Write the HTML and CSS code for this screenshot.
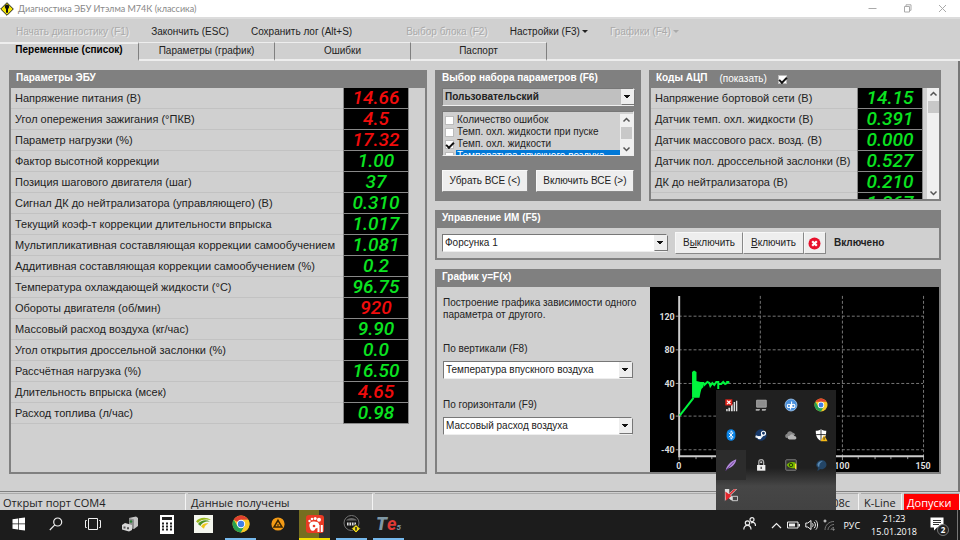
FILE: index.html
```html
<!DOCTYPE html>
<html lang="ru">
<head>
<meta charset="utf-8">
<title>Диагностика ЭБУ Итэлма М74К (классика)</title>
<link rel="stylesheet" href="styles.css">
</head>
<body>
<header class="titlebar">
  <svg class="app-icon" width="14" height="14" viewBox="0 0 14 14"><path d="M7 .7 13.3 7 7 13.3.7 7z" fill="#f3e600" stroke="#222" stroke-width="1"/><path d="M6 6h2v4.800H6z" fill="#111"/><circle cx="7" cy="4.800" r="2.200" fill="#111"/></svg>
  <h1 class="title">Диагностика ЭБУ Итэлма М74К (классика)</h1>
  <div class="window-buttons">
    <button type="button" aria-label="Свернуть"><svg width="9" height="9" viewBox="0 0 9 9"><path d="M.5 4.500h8"/></svg></button>
    <button type="button" aria-label="Восстановить"><svg width="9" height="9" viewBox="0 0 9 9"><path d="M1.500 2.500h5v5.500h-5zM3 2.500V.8h5v5.500H6.500"/></svg></button>
    <button type="button" aria-label="Закрыть"><svg width="9" height="9" viewBox="0 0 9 9"><path d="M1 1l7 7M8 1 1 8"/></svg></button>
  </div>
</header>

<nav class="menu">
  <button type="button" disabled>Начать диагностику (F1)</button>
  <button type="button">Закончить (ESC)</button>
  <button type="button">Сохранить лог (Alt+S)</button>
  <button type="button" class="group-start" disabled>Выбор блока (F2)</button>
  <button type="button" class="drop">Настройки (F3)</button>
  <button type="button" class="drop" disabled>Графики (F4)</button>
</nav>

<div class="tabs" role="tablist">
  <button type="button" role="tab" class="tab active" aria-selected="true">Переменные (список)</button>
  <button type="button" role="tab" class="tab">Параметры (график)</button>
  <button type="button" role="tab" class="tab">Ошибки</button>
  <button type="button" role="tab" class="tab">Паспорт</button>
  <span class="tab-rest"></span>
</div>

<main class="content">
  <section class="panel ecu">
    <h2>Параметры ЭБУ</h2>
    <table class="readings">
      <tr><th scope="row">Напряжение питания (В)</th><td class="bad">14.66</td></tr>
      <tr><th scope="row">Угол опережения зажигания (°ПКВ)</th><td class="bad">4.5</td></tr>
      <tr><th scope="row">Параметр нагрузки (%)</th><td class="bad">17.32</td></tr>
      <tr><th scope="row">Фактор высотной коррекции</th><td>1.00</td></tr>
      <tr><th scope="row">Позиция шагового двигателя (шаг)</th><td>37</td></tr>
      <tr><th scope="row">Сигнал ДК до нейтрализатора (управляющего) (В)</th><td>0.310</td></tr>
      <tr><th scope="row">Текущий коэф-т коррекции длительности впрыска</th><td>1.017</td></tr>
      <tr><th scope="row">Мультипликативная составляющая коррекции самообучением</th><td>1.081</td></tr>
      <tr><th scope="row">Аддитивная составляющая коррекции самообучением (%)</th><td>0.2</td></tr>
      <tr><th scope="row">Температура охлаждающей жидкости (°C)</th><td>96.75</td></tr>
      <tr><th scope="row">Обороты двигателя (об/мин)</th><td class="bad">920</td></tr>
      <tr><th scope="row">Массовый расход воздуха (кг/час)</th><td>9.90</td></tr>
      <tr><th scope="row">Угол открытия дроссельной заслонки (%)</th><td>0.0</td></tr>
      <tr><th scope="row">Рассчётная нагрузка (%)</th><td>16.50</td></tr>
      <tr><th scope="row">Длительность впрыска (мсек)</th><td class="bad">4.65</td></tr>
      <tr><th scope="row">Расход топлива (л/час)</th><td>0.98</td></tr>
    </table>
  </section>

  <section class="panel choice">
    <h2><label for="preset">Выбор набора параметров (F6)</label></h2>
    <div class="choice-body">
      <span class="combo grey"><select id="preset"><option>Пользовательский</option></select></span>
      <div class="checklist">
        <div class="checklist-items">
          <label><input type="checkbox"><span>Количество ошибок</span></label>
          <label><input type="checkbox"><span>Темп. охл. жидкости при пуске</span></label>
          <label><input type="checkbox" checked><span>Темп. охл. жидкости</span></label>
          <label class="selected"><input type="checkbox"><span>Температура впускного воздуха</span></label>
        </div>
        <div class="scrollbar">
          <svg width="9" height="6" viewBox="0 0 9 6"><path d="M1.500 4.500l3-3 3 3"/></svg>
          <i class="thumb"></i>
          <svg width="9" height="6" viewBox="0 0 9 6"><path d="M1.500 1.500l3 3 3-3"/></svg>
        </div>
      </div>
      <div class="choice-buttons">
        <button type="button" class="push">Убрать ВСЕ (&lt;)</button>
        <button type="button" class="push">Включить ВСЕ (&gt;)</button>
      </div>
    </div>
  </section>

  <section class="panel adc">
    <header class="adc-head">
      <h2>Коды АЦП</h2>
      <label>(показать) <input type="checkbox" checked></label>
    </header>
    <div class="adc-body">
      <div class="adc-view">
        <table class="readings">
          <tr><th scope="row">Напряжение бортовой сети (В)</th><td>14.15</td></tr>
          <tr><th scope="row">Датчик темп. охл. жидкости (В)</th><td>0.391</td></tr>
          <tr><th scope="row">Датчик массового расх. возд. (В)</th><td>0.000</td></tr>
          <tr><th scope="row">Датчик пол. дроссельной заслонки (В)</th><td>0.527</td></tr>
          <tr><th scope="row">ДК до нейтрализатора (В)</th><td>0.210</td></tr>
          <tr><th scope="row"></th><td>1.267</td></tr>
        </table>
      </div>
      <div class="scrollbar">
        <svg width="9" height="6" viewBox="0 0 9 6"><path d="M1.500 4.500l3-3 3 3"/></svg>
        <i class="thumb"></i>
        <svg width="9" height="6" viewBox="0 0 9 6"><path d="M1.500 1.500l3 3 3-3"/></svg>
      </div>
    </div>
  </section>

  <section class="panel control">
    <h2><label for="actuator">Управление ИМ (F5)</label></h2>
    <div class="control-body">
      <span class="combo"><select id="actuator"><option>Форсунка 1</option></select></span>
      <div class="control-buttons">
        <button type="button" class="push">В<u>ы</u>ключить</button>
        <button type="button" class="push"><u>В</u>ключить</button>
        <button type="button" class="push square" aria-label="Стоп"><svg width="13" height="13" viewBox="0 0 13 13"><circle cx="6.500" cy="6.500" r="6" fill="#e8102c"/><path d="M4.200 4.200l4.600 4.600M8.800 4.200 4.200 8.800" stroke="#fff" stroke-width="2.200"/></svg></button>
      </div>
      <strong>Включено</strong>
    </div>
  </section>

  <section class="panel graph">
    <h2>График y=F(x)</h2>
    <div class="graph-body">
      <div class="graph-form">
        <p>Построение графика зависимости одного параметра от другого.</p>
        <label for="axis-y">По вертикали (F8)</label>
        <span class="combo"><select id="axis-y"><option>Температура впускного воздуха</option></select></span>
        <label for="axis-x">По горизонтали (F9)</label>
        <span class="combo"><select id="axis-x"><option>Массовый расход воздуха</option></select></span>
      </div>
      <svg class="chart" viewBox="0 0 289 187" preserveAspectRatio="xMinYMin meet">
        <g class="grid-lines">
          <path d="M29 29.500H276M29 63.500H276M29 97.500H276M29 130.500H276M29 164.500H276"/>
          <path d="M111.500 9V171M194.500 9V171M276.500 9V171"/>
        </g>
        <path class="ticks" d="M26 29.500h3M26 63.500h3M26 97.500h3M26 130.500h3M26 164.500h3M29.500 171v4M46.500 171v3M62.500 171v3M79.500 171v3M95.500 171v3M111.500 171v4M128.500 171v3M144.500 171v3M161.500 171v3M177.500 171v3M194.500 171v4M210.500 171v3M227.500 171v3M243.500 171v3M260.500 171v3M276.500 171v4"/>
        <path class="axes" d="M29.500 9V171H277"/>
        <path class="trace" d="M30 130 44 112"/>
        <path class="trace-fill" d="M42.500 86l2-1.500L47 86v9l4 1 3 1v4l-2 2-1 4-1 5h-7.500z"/>
        <path class="trace" d="M50 98l2-1 2 0 1 2 3-3 2 1 1 3 2-3 2 2 2-3 2 0v7M69 98l3 0 2-2 2 2 4-2h-3 3"/>
        <g class="labels-y"><text x="25" y="33">120</text><text x="25" y="67">80</text><text x="25" y="101">40</text><text x="25" y="134">0</text><text x="25" y="168">-40</text></g>
        <g class="labels-x"><text x="29" y="184">0</text><text x="111" y="184">50</text><text x="194" y="184">100</text><text x="276" y="184">150</text></g>
      </svg>
    </div>
  </section>
</main>

<footer class="status">
  <span class="cell port">Открыт порт COM4</span>
  <span class="cell data">Данные получены</span>
  <span class="cell rest">08с</span>
  <span class="cell line">K-Line</span>
  <span class="cell alarm">Допуски</span>
</footer>

<div class="taskbar">
  <div class="apps">
    <button type="button" aria-label="Пуск"><svg width="14" height="14" viewBox="0 0 14 14" fill="#fff"><path d="M.5 2.200 6 1.400V6.600H.5zM6.700 1.300 13 .4V6.600H6.700zM.5 7.300H6v5.300L.5 11.800zM6.700 7.300H13v6.300l-6.300-.9z"/></svg></button>
    <button type="button" aria-label="Поиск"><svg width="14" height="14" viewBox="0 0 14 14" fill="none" stroke="#eee" stroke-width="1.200"><circle cx="8.700" cy="5" r="4"/><path d="M5.800 7.900.8 13"/></svg></button>
    <button type="button" aria-label="Представление задач"><svg width="16" height="14" viewBox="0 0 16 14" fill="none" stroke="#eee"><path d="M3.500 1.500h9v11h-9zM1.800 3.500H.5v7h1.300M14.200 3.500h1.300v7h-1.300"/></svg></button>
    <button type="button" aria-label="Адаптер"><svg width="18" height="16" viewBox="0 0 18 16"><path d="M8 2 15 .5l2 1.500v8l-4 3-5-2z" fill="#c4c4c4"/><path d="M8 2l5 1.500V13l-5-2z" fill="#8c8c8c"/><path d="M1 9l3-2 7 2v5l-3 1.500-7-2z" fill="#d7d7d7"/><path d="M2.500 10.500h2v2h-2zM6 11.300h2v2H6z" fill="#555"/><circle cx="10" cy="5.500" r="1.300" fill="#287e35"/></svg></button>
    <button type="button" aria-label="Калькулятор"><svg width="14" height="19" viewBox="0 0 14 19"><path fill="#fff" d="M0 0h14v19H0z"/><path fill="#222" d="M2 2h10v3H2z"/><path d="M2 8.500h10M2 11.500h10M2 14.500h10" stroke="#222" stroke-width="2" stroke-dasharray="2 2"/></svg></button>
    <button type="button" aria-label="Связь"><svg width="19" height="18" viewBox="0 0 19 18"><path fill="#f4f6ee" d="M0 0h19v18H0z"/><path d="M2 6.500C5 2.500 12 1.500 17 5c-5-1.200-11-.5-13 3z" fill="#98b81b"/><path d="M4 9c3-4 8-4.600 12-2.500C11 6 7.500 8 6.500 11z" fill="#4d9420"/><path d="M7 11.500c2-3 5-3.700 7.500-2.700-2 .3-4 2-4.500 5z" fill="#edc719"/></svg></button>
    <button type="button" class="running" aria-label="Chrome"><svg width="18" height="18" viewBox="0 0 18 18"><circle cx="9" cy="9" r="8.500" fill="#f7c928"/><path d="M9 9 1.640 4.750A8.500 8.500 0 0 1 16.360 4.750L9 5z" fill="#e0402f"/><path d="M1.640 4.750A8.500 8.500 0 0 0 9 17.500L12.500 11 9 9 5.500 11z" fill="#27a052"/><path d="M9 4.750h7.360A8.500 8.500 0 0 1 9 17.500L12.700 11z" fill="#f7c928"/><circle cx="9" cy="9" r="4.200" fill="#fff"/><circle cx="9" cy="9" r="3.200" fill="#3f7ee8"/></svg></button>
    <button type="button" aria-label="AIMP"><svg width="14" height="14" viewBox="0 0 14 14"><circle cx="7" cy="7" r="6.600" fill="#f49b16"/><path d="M7 3.300 11 10H3z" fill="none" stroke="#3b2500" stroke-width="1.500"/><path d="M7 7v2.500" stroke="#3b2500"/></svg></button>
    <button type="button" class="running attention" aria-label="Запись экрана"><svg width="18" height="18" viewBox="0 0 18 18"><rect width="18" height="18" rx="3" fill="#ea3a24"/><path d="M4 8c2-2 8-2 9 1 .8 3-1 4-3.500 4.500-1 3-4.500 3-5.200.5C3.700 12 2.500 10 4 8z" fill="#fff"/><circle cx="3.500" cy="6" r="1.200" fill="#fff"/><circle cx="6" cy="4" r="1.300" fill="#fff"/><circle cx="9.200" cy="3.500" r="1.500" fill="#fff"/><circle cx="13" cy="4.700" r="2" fill="#fff"/><circle cx="8" cy="11" r="1.300" fill="#ea3a24"/><path d="M12.500 10v7M15.800 10v7" stroke="#fff" stroke-width="2"/></svg></button>
    <button type="button" class="running" aria-label="Диагностика"><svg width="18" height="18" viewBox="0 0 18 18"><circle cx="8.500" cy="8" r="7.500" fill="#171717" stroke="#777"/><path d="M3 5.500C5 2 12 2 14 5.500z" fill="#666"/><path d="M4 7.500h9v3H4z" fill="#ddd"/><path d="M6 7v4M8.500 7v4M11 7v4" stroke="#333"/><path d="M13 9.500l4.500 4.200L13 18l-4.500-4.300z" fill="#f2dc16" stroke="#222"/><path d="M13 12v3.500" stroke="#222" stroke-width="1.500"/></svg></button>
    <button type="button" class="running te" aria-label="Te5"><b>T</b><em>e</em><sub>5</sub></button>
  </div>
  <div class="tray">
    <button type="button" class="people" aria-label="Люди"><svg width="13" height="13" viewBox="0 0 13 13" fill="none" stroke="#eee" stroke-width="1.200"><circle cx="4.500" cy="6" r="2.200"/><path d="M.8 12.500c0-5.500 7.200-5.500 7.200 0"/><circle cx="9" cy="2.700" r="2"/><path d="M8 6c2.500-1.500 4.500 0 4.500 3"/></svg></button>
    <button type="button" aria-label="Скрытые значки"><svg width="11" height="7" viewBox="0 0 11 7" fill="none" stroke="#eee" stroke-width="1.200"><path d="M1 6l4.500-4.500L10 6"/></svg></button>
    <svg width="13" height="8" viewBox="0 0 13 8"><path d="M.5 1h10.500v6H.5z" fill="none" stroke="#eee"/><path d="M2 2.500h6v3H2zM11.500 3H13v2.500h-1.500z" fill="#eee"/></svg>
    <svg width="13" height="12" viewBox="0 0 13 12" fill="none" stroke="#eee"><path d="M.8 4h2L6 1.500v9L2.800 8h-2z"/><path d="M7.500 4.300c.8 1 .8 2.400 0 3.400M9.200 2.800c1.600 1.800 1.600 4.600 0 6.400M10.800 1.300c2.400 2.600 2.400 6.800 0 9.400"/></svg>
    <svg width="12" height="12" viewBox="0 0 12 12" fill="none" stroke="#777"><path d="M2 11C2 6 6 2.500 11 2.500M5 11c0-3 3-5.500 6-5.500M8 11c0-1.500 1.500-2.500 3-2.500"/><path d="M2 .5v3M.5 2h3" stroke="#eee"/><circle cx="10.500" cy="10.500" r=".8" fill="#999"/></svg>
    <span class="lang">РУС</span>
    <time class="clock" datetime="2018-01-15T21:23">21:23<br>15.01.2018</time>
    <button type="button" class="notify" aria-label="Уведомления: 2"><svg width="14" height="14" viewBox="0 0 14 14"><path d="M.5.500h13v10H7L4 13.500v-3H.5z" fill="#fff"/><path d="M3 3.500h8M3 5.500h8M3 7.500h6" stroke="#333"/></svg><span class="badge">2</span></button>
  </div>

  <div class="flyout">
    <svg viewBox="0 0 16 16"><path d="M8 15V7h2v8zM5 15v-4h2v4zM11 15V4.500h1.700V15zM13.700 15V3h1.500v12zM2.500 15v-2.500h1.700V15z" fill="#ddd"/><path d="M1.500 1.500h8v7h-8z" fill="#e2231a"/><path d="M3.500 3l4 4M7.500 3l-4 4" stroke="#fff" stroke-width="1.500"/></svg>
    <svg viewBox="0 0 16 16"><path d="M3 2.500h11v8H3z" fill="#8d8d8d" stroke="#aaa"/><path d="M2 12.500h5l-1 2H2zM9 12.500h5l-1 2H9z" fill="#aaa"/></svg>
    <svg viewBox="0 0 16 16"><circle cx="8" cy="8" r="6.800" fill="#4a90dc" stroke="#9cc4ee"/><circle cx="5.600" cy="9" r="1.900" fill="none" stroke="#fff" stroke-width="1.200"/><circle cx="10.600" cy="9" r="1.900" fill="none" stroke="#fff" stroke-width="1.200"/><path d="M7.500 7v6M8.700 4v7" stroke="#fff" stroke-width="1.200"/></svg>
    <svg viewBox="2 2 14 14"><circle cx="9" cy="9" r="6.500" fill="#f7c928"/><path d="M3.400 5.800A6.500 6.500 0 0 1 14.600 5.800H9z" fill="#e0402f"/><path d="M3.400 5.800A6.500 6.500 0 0 0 9 15.500L11.500 11 6 10z" fill="#27a052"/><circle cx="9" cy="9" r="3.200" fill="#fff"/><circle cx="9" cy="9" r="2.400" fill="#3f7ee8"/></svg>
    <svg viewBox="0 0 16 16"><rect x="3" y="1.500" width="10" height="13" rx="5" fill="#0a84e8"/><path d="M5.500 5.500l5 5L8 12.800V3.200l2.500 2.300-5 5" fill="none" stroke="#fff"/></svg>
    <svg viewBox="0 0 16 16"><circle cx="8" cy="8" r="6.500" fill="#173a6c"/><path d="M1.800 9.500 7 11.500 11 7" fill="none" stroke="#e7eef5" stroke-width="2.500"/><circle cx="10.800" cy="6" r="2.300" fill="#173a6c" stroke="#fff" stroke-width="1.300"/><circle cx="6" cy="11" r="1.800" fill="#fff"/></svg>
    <svg viewBox="0 0 16 16"><path d="M3 11.500a2.600 2.600 0 0 1 .5-5 3.500 3.500 0 0 1 6.500-1c2 0 2.500 1.500 2.500 2.500z" fill="#858585"/><path d="M6 13a2 2 0 0 1 .3-4 3 3 0 0 1 5.500 0c3 .2 3 4 .7 4z" fill="#b5b5b5"/></svg>
    <svg viewBox="0 0 16 16"><path d="M8 1.300c2 1.200 4 1.700 6 1.700 0 6-1.500 9.500-6 11.700C3.500 12.500 2 9 2 3c2 0 4-.5 6-1.700z" fill="#fff"/><path d="M8 1.500v13M2.500 7.500h11" stroke="#222"/><path d="M11.500 8 15.500 15h-8z" fill="#f7ba16"/><path d="M11.500 10.500v3" stroke="#222"/></svg>
    <span class="hot"><svg viewBox="0 0 16 16"><path d="M2 14C3 9 7 4 14 1.500 14 6 9 11.500 3.500 12.500z" fill="#b48bdc"/><path d="M2 14.500 11.500 4" stroke="#693d94"/></svg></span>
    <svg viewBox="0 0 16 16"><path d="M3.500 8h9.500v6.500H3.500z" fill="#eee"/><path d="M5.500 8V4.500c0-3.500 5.500-3.500 5.500 0V8" fill="none" stroke="#aaa" stroke-width="1.500"/><path d="M8.200 10v2.500" stroke="#333" stroke-width="1.300"/><circle cx="8.200" cy="4.800" r="1.200" fill="#ccc"/></svg>
    <svg viewBox="0 0 16 16"><rect x="2" y="2" width="12" height="12" rx="1" fill="#333" stroke="#888"/><path d="M3 8c2-4 7-4 10-3v6c-3 1.500-7 1-10-3z" fill="#78b900"/><circle cx="8" cy="8" r="2" fill="none" stroke="#1d3200"/><path d="M12.500 6.500h1.500v6h-1.500z" fill="#ffe52a"/></svg>
    <svg viewBox="0 0 16 16"><path d="M3 6c3-5 9-5 11 0 1.500 5-4 8-7 6.500L4 15l.5-4C2.500 10 2 8 3 6z" fill="#234566"/><path d="M4 7c1-3 4-4 6-3-3 1-4 3-4 6-1 0-2-1-2-3z" fill="#5a8ab3"/></svg>
    <svg viewBox="0 0 16 16"><path d="M1 1h5v5L11.500 1H15L8 8l4 6H8L4 10l-3 5z" fill="#ddd"/><path d="M1.500 4 8.500 9 2 14.500zM11.500 1.500H14L7 8 5.500 7z" fill="#e3262c"/><path d="M9.500 9.500h6v5h-6z" fill="#444" stroke="#ddd"/></svg>
  </div>
</div>
</body>
</html>
```
FILE: styles.css
```css
* { box-sizing: border-box; }

:root {
  --face: #d0d0d0;
  --dark: #808080;
  --ui: "Liberation Sans", Arial, sans-serif;
  --digits: Roboto, "Liberation Sans", sans-serif;
  --segoe: "Open Sans", "Noto Sans", sans-serif;
}

body {
  margin: 0;
  min-height: 100vh;
  display: flex;
  flex-direction: column;
  background: var(--face);
  color: #222;
  font: 10px/12px var(--ui);
}

h1, h2, p { margin: 0; }

button {
  border: 0;
  padding: 0;
  background: none;
  color: inherit;
  font: inherit;
}

/* Title bar */
.titlebar {
  display: flex;
  align-items: center;
  height: 17px;
  background: #fff;
}

.title {
  margin-left: 4px;
  color: #888;
  font: 9px/18px Lato, "Open Sans", sans-serif;
}

.window-buttons {
  display: flex;
  margin-left: auto;
}

.window-buttons button {
  display: grid;
  place-items: center;
  width: 35px;
  height: 16px;
}

.window-buttons svg { fill: none; stroke: #aaa; }

.app-icon { flex: none; }

/* Menu */
.menu {
  display: flex;
  align-items: center;
  gap: 22px;
  height: 25px;
  padding: 2px 16px 0;
  border-top: 2px solid #dcdcdc;
  white-space: nowrap;
}

.menu button:disabled {
  color: #aaa;
  text-shadow: 1px 1px #eee;
}

.menu .group-start { margin-left: 32px; }

.drop::after {
  content: "";
  display: inline-block;
  margin-left: 2px;
  border: 3px solid transparent;
  border-top-color: currentColor;
  border-bottom: 0;
  vertical-align: 2px;
}

/* Tabs */
.tabs { display: flex; height: 19px; }

.tab {
  width: 136px;
  border-top: 1px solid #eee;
  border-right: 1px solid var(--dark);
  border-bottom: 2px solid #eee;
  text-align: center;
}

.tab.active {
  width: 139px;
  padding-bottom: 3px;
  border-top-width: 2px;
  border-bottom-color: var(--face);
  color: #000;
  font-weight: bold;
}

.tab-rest { flex: 1; border-bottom: 2px solid #eee; }

/* Content */
.content {
  flex: 1;
  display: grid;
  grid-template-columns: 418fr 206fr 292fr;
  grid-template-rows: auto auto 1fr;
  column-gap: 8px;
  row-gap: 9px;
  padding: 9px 17px 17px 9px;
  border-right: 2px solid #777;
  border-bottom: 1px solid var(--dark);
}

.panel {
  min-width: 0;
  border: 2px solid var(--dark);
  border-top: 0;
}

.panel h2 {
  height: 18px;
  padding-left: 5px;
  background: var(--dark);
  color: #fff;
  font: bold 10px/15px var(--ui);
}

.ecu { grid-row: 1 / 4; }
.control, .graph { grid-column: 2 / 4; }

/* Readings */
.readings {
  width: 100%;
  border-collapse: separate;
  border-spacing: 0;
}

.ecu .readings { padding-right: 16px; }
.adc .readings { padding-right: 4px; }

.readings tr { height: 21px; }

.readings th {
  padding: 0 0 0 4px;
  border-bottom: 1px solid #c2c2c2;
  font: 11px/20px var(--ui);
  text-align: left;
  white-space: nowrap;
}

.readings td {
  width: 66px;
  padding: 0;
  border: 1px solid #888;
  border-top: 0;
  background: #000;
  color: #0be321;
  font: italic 500 19px/20px var(--digits);
  text-align: center;
}

.readings .bad { color: #f00c0c; }

/* Drop-downs */
.combo {
  display: grid;
  grid-template-columns: 1fr 12px;
  align-items: center;
  height: 18px;
  border: 1px solid #777;
  border-right-color: #eee;
  border-bottom-color: #eee;
  background: #fff;
}

.combo select {
  grid-area: 1 / 1 / 2 / 3;
  width: 100%;
  height: 100%;
  padding: 0 14px 0 2px;
  border: 0;
  appearance: none;
  background: none;
  color: #222;
  font: 10px/14px var(--ui);
}

.combo::after {
  content: "";
  grid-area: 1 / 2;
  width: 12px;
  height: 14px;
  border: 1px solid #777;
  border-top-color: #eee;
  border-left-color: #eee;
  background: linear-gradient(#111, #111) 2px 5px / 6px 1px no-repeat, linear-gradient(#111, #111) 3px 6px / 4px 1px no-repeat, linear-gradient(#111, #111) 4px 7px / 2px 1px no-repeat, #eee;
  pointer-events: none;
}

.combo.grey { background: #c0c0c0; }
.combo.grey select { font-weight: bold; }

/* Checkboxes */
input[type="checkbox"] {
  flex: none;
  display: grid;
  place-items: center;
  width: 9px;
  height: 9px;
  margin: 0;
  appearance: none;
  border: 1px solid #bbb;
  background: #fff;
}

input[type="checkbox"]:checked::before {
  content: "";
  width: 6px;
  height: 3px;
  border: solid #111;
  border-width: 0 0 2px 2px;
  transform: rotate(-45deg);
}

/* Parameter choice */
.choice { background: var(--dark); }

.choice-body { padding: 0 5px 7px; }

.checklist {
  display: flex;
  height: 45px;
  margin-top: 5px;
  padding: 2px 0 0 2px;
  border: 1px solid #777;
  border-right-color: #eee;
  border-bottom-color: #eee;
  background: var(--face);
  overflow: hidden;
}

.checklist-items { flex: 1; min-width: 0; overflow: hidden; }

.checklist label {
  display: flex;
  align-items: center;
  height: 12px;
  gap: 2px;
}

.checklist label span {
  flex: 1;
  padding-left: 1px;
  white-space: nowrap;
}

.checklist .selected span { background: #0078d7; color: #fff; }

.scrollbar {
  display: flex;
  flex-direction: column;
  align-items: center;
  width: 13px;
  padding: 3px 0;
  background: #f0f0f0;
}

.scrollbar svg { fill: none; stroke: #555; stroke-width: 1.5px; }

.thumb {
  width: 11px;
  height: 12px;
  margin: 4px 0 auto;
  background: #c8c8c8;
}

.choice-buttons {
  display: flex;
  gap: 8px;
  margin-top: 14px;
}

.push {
  height: 22px;
  border: 1px solid #f8f8f8;
  border-right-color: #888;
  border-bottom-color: #888;
  background: #eee;
}

.choice-buttons .push { flex: 1 1 auto; }

/* ADC codes */
.adc { display: flex; flex-direction: column; }

.adc-head {
  display: flex;
  gap: 12px;
  background: var(--dark);
}

.adc-head label {
  display: flex;
  align-items: center;
  gap: 11px;
  color: #fff;
}

.adc-body { flex: 1; display: flex; }

.adc-view { flex: 1; height: 111px; overflow: hidden; }

.adc-body .scrollbar { width: 12px; }

/* Actuator control */
.control-body {
  display: flex;
  align-items: center;
  height: 30px;
  padding: 0 5px;
}

.control-body .combo { flex: 0 1 225px; }

.control-buttons { display: flex; margin: 0 8px; }

.control-buttons .push { padding: 0 7px; }

.control-buttons .square {
  display: grid;
  place-items: center;
  width: 22px;
  padding: 0;
}

/* Graph */
.graph { display: flex; flex-direction: column; }

.graph-body {
  flex: 1;
  display: grid;
  grid-template-columns: 213fr 289fr;
}

.graph-form {
  min-width: 0;
  padding: 10px 8px 0 6px;
}

.graph-form label { display: block; margin: 22px 0 6px; }
.graph-form .combo { margin-right: 10px; }
.graph-form .combo + label { margin-top: 20px; }

.chart {
  width: 100%;
  height: 0;
  min-height: 100%;
  background: #000;
}

.chart path { fill: none; }
.grid-lines { stroke: #777; stroke-dasharray: 3 2; }
.ticks { stroke: #999; }
.axes { stroke: #ccc; stroke-width: 2px; }
.chart .trace { stroke: #00f53d; stroke-width: 2px; }
.chart .trace-fill { fill: #00f53d; }
.chart text { fill: #ddd; font: bold 9px var(--digits); }
.labels-y { text-anchor: end; }
.labels-x { text-anchor: middle; }

/* Status line */
.status {
  display: flex;
  gap: 2px;
  height: 18px;
  padding-top: 1px;
  font: 11px/17px var(--segoe);
  white-space: nowrap;
}

.cell {
  padding-left: 3px;
  border-top: 1px solid #aaa;
  border-right: 1px solid #f4f4f4;
}

.port { width: 186px; }
.data { width: 185px; }
.rest { flex: 1; padding-right: 8px; text-align: right; }
.line { width: 41px; }
.alarm { width: 56px; background: #f00; color: #fff; }

/* Taskbar */
.taskbar {
  position: relative;
  display: flex;
  justify-content: space-between;
  height: 30px;
  background: #1c1c1c;
  color: #fff;
}

.apps { display: flex; gap: 6px; padding-left: 3px; }

.apps button {
  display: flex;
  align-items: center;
  justify-content: center;
  width: 31px;
  border-bottom: 2px solid transparent;
}

.apps .running { border-bottom-color: #76b9ed; }

.apps .attention {
  border-bottom-color: #f4e000;
  background: linear-gradient(90deg, #756e20 66%, #333 66%);
}

.apps .te { font: bold italic 18px/20px var(--digits); }
.te b { color: #7f98a5; }
.te em { color: #e03a36; }
.te sub { align-self: flex-end; color: #7f98a5; font-size: 8px; }

.tray {
  display: flex;
  align-items: center;
  gap: 5px;
  margin-right: 2px;
  padding-right: 13px;
  border-right: 1px solid #777;
  font: 9px/13px var(--segoe);
}

.people { margin-right: 10px; }
.lang { margin-left: 3px; }
.clock { margin-left: 6px; text-align: center; }

.notify { position: relative; margin-left: 8px; }

.badge {
  position: absolute;
  left: 7px;
  top: 7px;
  width: 12px;
  height: 12px;
  border: 1px solid #777;
  border-radius: 50%;
  background: #222;
  font: bold 8px/10px var(--segoe);
}

.flyout {
  position: absolute;
  right: 124px;
  bottom: 100%;
  display: grid;
  grid-template-columns: repeat(4, 30px);
  grid-auto-rows: 30px;
  place-items: center;
  background: linear-gradient(#202020 65%, #464646 80%, #424242);
}

.flyout svg { display: block; width: 14px; height: 14px; }

.hot {
  display: grid;
  place-items: center;
  width: 30px;
  height: 30px;
  background: #2c2c2c;
}
```
